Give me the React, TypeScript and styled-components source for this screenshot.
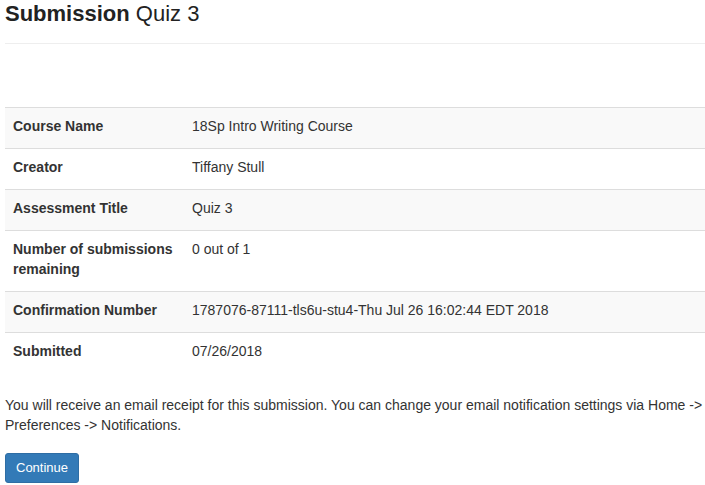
import styled, { createGlobalStyle } from "styled-components";
import React from "react";

const GlobalStyle = createGlobalStyle`
  body {
    margin: 0;
    font-family: "Liberation Sans", Arial, Helvetica, sans-serif;
    font-size: 14px;
    line-height: 20px;
    color: #333;
    background: #fff;
  }
`;

const Page = styled.div`
  padding-left: 5px;
`;

const PageHeader = styled.h1`
  margin: 0;
  padding: 1px 0 17px;
  border-bottom: 1px solid #eee;
  font-size: 22px;
  line-height: 25px;
  font-weight: 400;
  color: #222;
`;

const HeaderStrong = styled.strong`
  font-weight: 700;
`;

const InfoTable = styled.table`
  width: 100%;
  margin-top: 63px;
  margin-bottom: 22px;
  border-collapse: collapse;
  border-spacing: 0;
`;

const Row = styled.tr<{ $striped?: boolean }>`
  background: ${(p) => (p.$striped ? "#f9f9f9" : "transparent")};
`;

const Label = styled.th`
  width: 163px;
  padding: 8px 8px 12px;
  text-align: left;
  vertical-align: top;
  font-weight: 700;
  border-top: 1px solid #ddd;
`;

const Value = styled.td`
  padding: 8px 8px 12px;
  vertical-align: top;
  border-top: 1px solid #ddd;
`;

const Note = styled.p`
  margin: 0 0 18px;
  line-height: 20px;
`;

const ContinueButton = styled.button`
  font-family: inherit;
  font-size: 13px;
  line-height: 20px;
  padding: 4px 10px;
  color: #fff;
  background: #337ab7;
  border: 1px solid #2e6da4;
  border-radius: 3px;
  cursor: pointer;
`;

const rows: [string, string][] = [
  ["Course Name", "18Sp Intro Writing Course"],
  ["Creator", "Tiffany Stull"],
  ["Assessment Title", "Quiz 3"],
  ["Number of submissions remaining", "0 out of 1"],
  ["Confirmation Number", "1787076-87111-tls6u-stu4-Thu Jul 26 16:02:44 EDT 2018"],
  ["Submitted", "07/26/2018"],
];

export default function App() {
  return (
    <Page>
      <GlobalStyle />
      <PageHeader>
        <HeaderStrong>Submission</HeaderStrong> Quiz 3
      </PageHeader>
      <InfoTable>
        <tbody>
          {rows.map(([label, value], i) => (
            <Row key={label} $striped={i % 2 === 0}>
              <Label>{label}</Label>
              <Value>{value}</Value>
            </Row>
          ))}
        </tbody>
      </InfoTable>
      <Note>
        You will receive an email receipt for this submission. You can change your email
        notification settings via Home -&gt; Preferences -&gt; Notifications.
      </Note>
      <ContinueButton>Continue</ContinueButton>
    </Page>
  );
}
